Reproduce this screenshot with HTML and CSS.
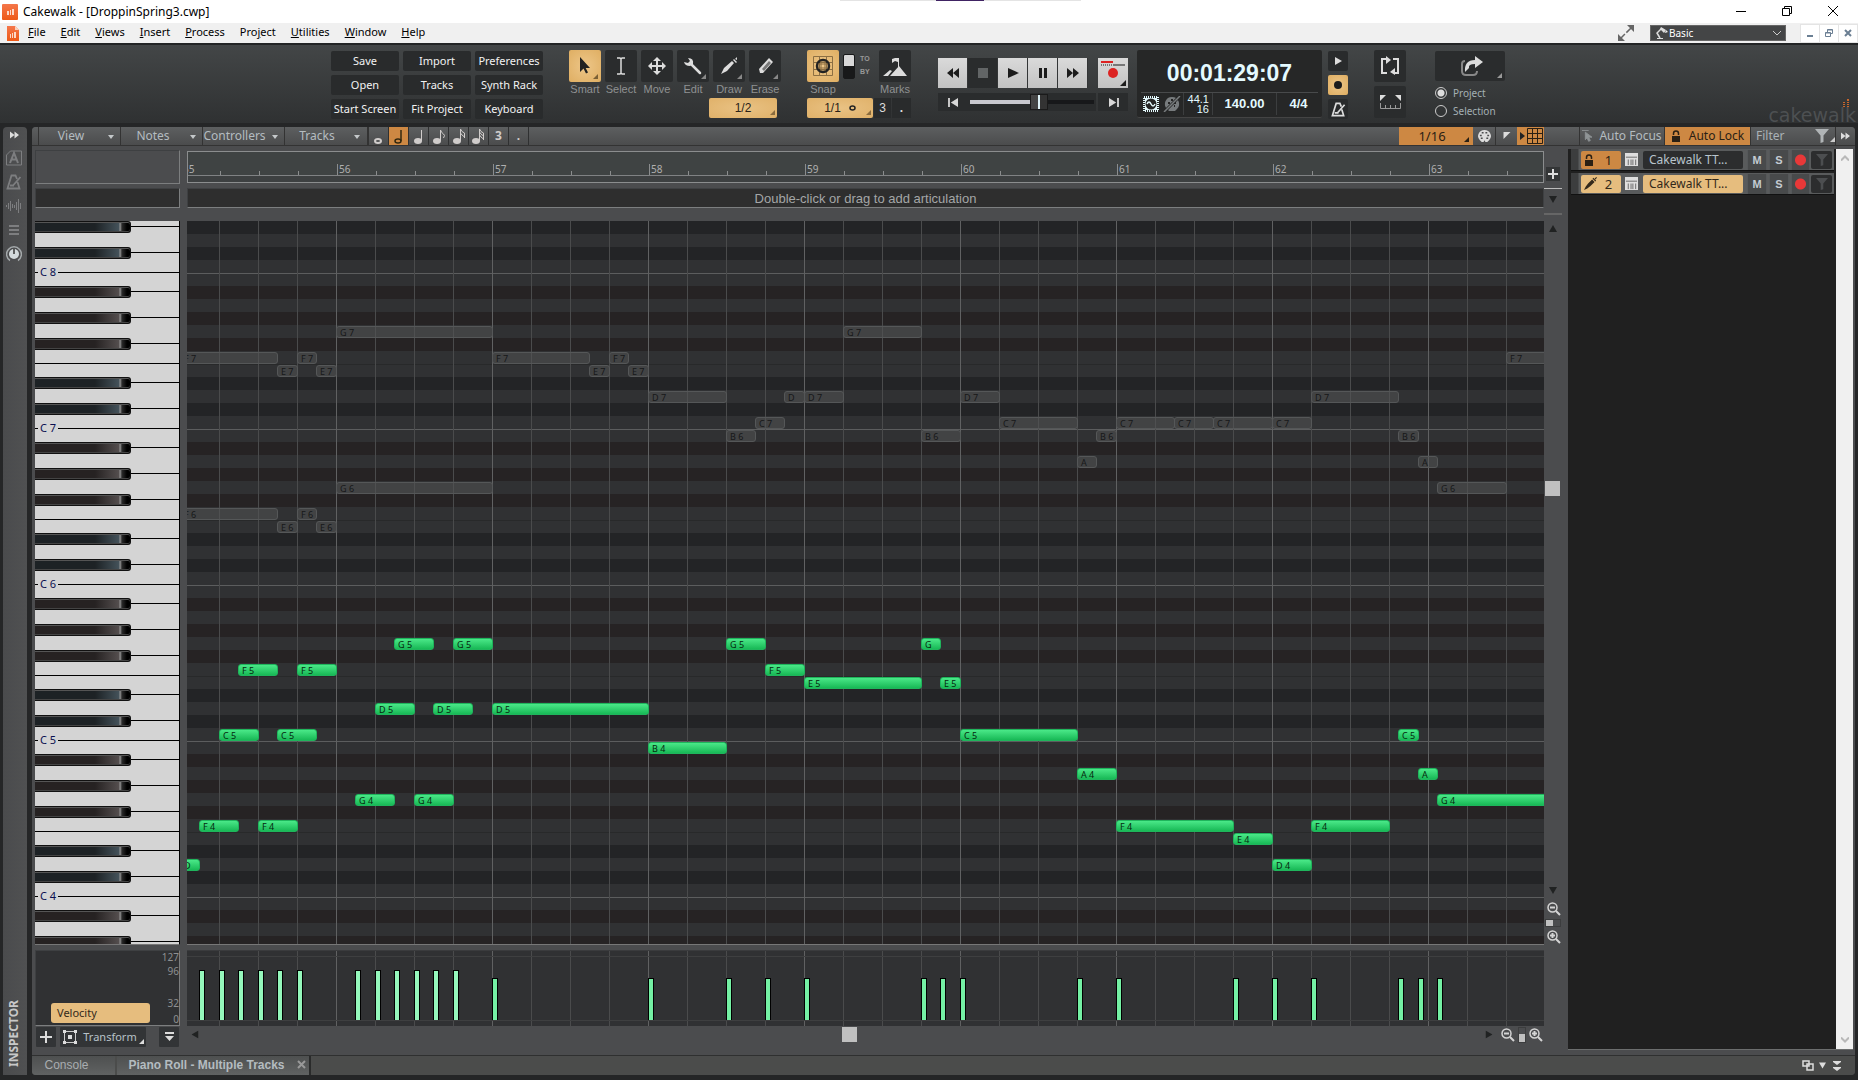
FILE: index.html
```html
<!DOCTYPE html>
<html lang="en">
<head>
<meta charset="utf-8">
<title>Cakewalk - [DroppinSpring3.cwp]</title>
<link rel="stylesheet" href="styles.css">
</head>
<body>
<svg class="defs" aria-hidden="true">
  <defs>
    <linearGradient id="flame" x1="0" y1="0" x2="0" y2="1"><stop offset="0" stop-color="#f4764a"/><stop offset="1" stop-color="#ee5a17"/></linearGradient>
    <symbol id="i-funnel" viewBox="0 0 14 14"><path d="M0 0h14L8.500 6.500V13L5.500 14V6.500z"/></symbol>
    <symbol id="i-ff" viewBox="0 0 10 8"><path d="M0 0l5 4-5 4zM5 0l5 4-5 4z"/></symbol>
    <symbol id="i-corner" viewBox="0 0 5 5"><path d="M5 0v5H0z"/></symbol>
    <symbol id="i-down" viewBox="0 0 8 7"><path d="M0 0h8L4 7z"/></symbol>
    <symbol id="i-metro" viewBox="0 0 16 16"><path d="M11 5L9.500 1.500h-4L1.500 14.500h12L11.500 8M4 11.500h4M14.500 3L7 11.500" fill="none" stroke="currentColor" stroke-width="1.800"/></symbol>
    <symbol id="i-rack" viewBox="0 0 14 14"><path d="M0 0h14v14H0z"/><path d="M1 4.500h12" stroke="#666"/><path d="M3.500 7v6M6.500 7v6M8.500 7v6M11.500 7v6" stroke="#666"/></symbol>
    <symbol id="i-zoomout" viewBox="0 0 14 14"><circle cx="5.500" cy="5.500" r="4.500" fill="none" stroke="currentColor" stroke-width="1.500"/><path d="M3 5.500h5M9 9l4 4" fill="none" stroke="currentColor" stroke-width="2"/></symbol>
    <symbol id="i-zoomin" viewBox="0 0 14 14"><circle cx="5.500" cy="5.500" r="4.500" fill="none" stroke="currentColor" stroke-width="1.500"/><path d="M3 5.500h5M5.500 3v5M9 9l4 4" fill="none" stroke="currentColor" stroke-width="2"/></symbol>
    <symbol id="i-lock" viewBox="0 0 10 12"><path d="M1 6h8v6H1z"/><path d="M2.500 5V3.500q0-2.500 2.500-2.500t2.500 2.500V5" fill="none" stroke="currentColor" stroke-width="1.500"/></symbol>
    <symbol id="i-pen" viewBox="0 0 16 16"><path d="M0 16l2-4 3-4 5-5 3 3-5 5-4 3zM10.500 2l1-1 3.500 3.500-1 1zM13 2l2-2 1 1-2 2z"/></symbol>
  </defs>
</svg>

<header class="titlebar">
  <svg class="app-icon" viewBox="0 0 16 16"><rect width="16" height="16" rx="1" fill="url(#flame)"/><path d="M5 7h2v4H5zM8 6h1v5H8zM10 5h2v6h-2z" fill="#fbd9c8"/></svg>
  <h1>Cakewalk - [DroppinSpring3.cwp]</h1>
  <div class="window-buttons">
    <button aria-label="Minimize"><svg viewBox="0 0 10 10"><path d="M0 5.500h10"/></svg></button>
    <button aria-label="Restore"><svg viewBox="0 0 10 10"><path d="M.5 2.500h7v7h-7zM2.500 2.500v-2h7v7h-2"/></svg></button>
    <button aria-label="Close"><svg viewBox="0 0 10 10"><path d="M0 0l10 10M10 0L0 10"/></svg></button>
  </div>
</header>

<nav class="menubar">
  <svg class="doc-icon" viewBox="0 0 12 15"><path d="M0 0h8l4 4v11H0z" fill="url(#flame)"/><path d="M8 0v4h4z" fill="#fbd0bb"/><path d="M3 8h1v4H3zM5 7h1v5H5zM7 6h2v6H7z" fill="#fbd9c8"/></svg>
  <a href="#"><u>F</u>ile</a><a href="#"><u>E</u>dit</a><a href="#"><u>V</u>iews</a><a href="#"><u>I</u>nsert</a><a href="#"><u>P</u>rocess</a><a href="#">Pro<u>j</u>ect</a><a href="#"><u>U</u>tilities</a><a href="#"><u>W</u>indow</a><a href="#"><u>H</u>elp</a>
  <div class="menu-right">
    <svg class="expand" viewBox="0 0 16 16"><path d="M9 0h7v7zM0 9v7h7z" fill="#666"/><path d="M2 14L14 2" stroke="#666" stroke-width="1.500" stroke-dasharray="7 2"/></svg>
    <div class="workspace-pick">
      <svg class="lamp" viewBox="0 0 12 12"><path d="M5 0l5 3-2 3-4-4zM1 11h6v1H1z" fill="#ddd"/><path d="M5 2L1 6l3 5" fill="none" stroke="#ddd" stroke-width="1.500"/><path d="M10 3l2 2-3 1z" fill="#eee"/></svg>
      <select aria-label="Workspace"><option>Basic</option></select>
      <svg class="caret" viewBox="0 0 8 5"><path d="M0 0l4 4 4-4" fill="none" stroke="#ccc"/></svg>
    </div>
    <div class="mdi-buttons">
      <button aria-label="Minimize document"><svg viewBox="0 0 8 8"><path d="M1 7h6" stroke="#6b7f93" stroke-width="2"/></svg></button>
      <button aria-label="Restore document"><svg viewBox="0 0 8 8"><path d="M.5 3.500h5v4h-5zM2.500 3V.500h5v4H6M.5 4h5M2.500 1h5" stroke="#6b7f93" fill="none"/></svg></button>
      <button aria-label="Close document"><svg viewBox="0 0 8 8"><path d="M1 1l6 6M7 1L1 7" stroke="#6b7f93" stroke-width="2"/></svg></button>
    </div>
  </div>
</nav>

<section class="control-bar">
  <div class="bar-start"></div>
  <div class="command-grid">
    <button>Save</button><button>Import</button><button>Preferences</button>
    <button>Open</button><button>Tracks</button><button>Synth Rack</button>
    <button>Start Screen</button><button>Fit Project</button><button>Keyboard</button>
  </div>
  <div class="tools">
    <div class="tool-row">
      <label class="tool"><button class="tile on"><svg viewBox="0 0 32 32"><path d="M11 7v15l3.500-3.500 2.500 5 2-1-2.300-4.500H21z" fill="#222"/><path d="M29 24v5h-5z" fill="#7a5f35"/></svg></button>Smart</label>
      <label class="tool"><button class="tile"><svg viewBox="0 0 32 32"><path d="M12 8h3l1 1 1-1h3M16 9v14M12 24h3l1-1 1 1h3" fill="none" stroke="#ddd" stroke-width="1.500"/></svg></button>Select</label>
      <label class="tool"><button class="tile"><svg viewBox="0 0 32 32"><path d="M16 9v14M9 16h14" stroke="#ddd" stroke-width="2"/><path d="M16 7l4 4h-8zM16 25l4-4h-8zM7 16l4-4v8zM25 16l-4-4v8z" fill="#ddd"/></svg></button>Move</label>
      <label class="tool"><button class="tile"><svg viewBox="0 0 32 32"><path d="M14 14l9 9" stroke="#ddd" stroke-width="2.500" stroke-linecap="round"/><path d="M7 12q1 4 6 4l3-2q1-6-5-6l2 3-2 2z" fill="#ddd"/><path d="M29 24v5h-5z" fill="#888"/></svg></button>Edit</label>
      <label class="tool"><button class="tile"><svg viewBox="0 0 32 32"><path d="M8 24l3-6 8-7 2 2-7 8zM20 10l1-1 3 3-1 1zM22 9l2-2v3z" fill="#ddd"/><path d="M29 24v5h-5z" fill="#888"/></svg></button>Draw</label>
      <label class="tool"><button class="tile"><svg viewBox="0 0 32 32"><path d="M10 19L20 8l4 4-10 11h-3z" fill="#ddd"/><path d="M13 19l7-8 2 2-7 8z" fill="#777"/><path d="M29 24v5h-5z" fill="#888"/></svg></button>Erase</label>
    </div>
    <button class="value draw-res">1/2<svg class="corner"><use href="#i-corner"/></svg></button>
  </div>
  <div class="snap">
    <div class="snap-row">
      <label class="tool"><button class="tile on"><svg viewBox="0 0 32 32"><path d="M6.500 6.500h19v19h-19zM12.500 6v20M19.500 6v20M6 12.500h20M6 19.500h20" fill="none" stroke="#8c6f43"/><circle cx="16" cy="16" r="6" fill="none" stroke="#222" stroke-width="2.500"/><path d="M14 11v10M18 11v10M11 14h10M11 18h10" stroke="#8c6f43"/></svg></button>Snap</label>
      <div class="toby"><button class="switch" aria-label="Snap to or by"></button><div class="toby-text"><span>TO</span><span>BY</span></div></div>
      <label class="tool"><button class="tile"><svg viewBox="0 0 32 32"><path d="M11 26l9-10 8 10zM4 26l7-6 2 1-4 5z" fill="#ddd"/><path d="M19.500 8v10" stroke="#ddd"/><path d="M13 9l3-1h3v4l-3-1-3 2z" fill="#ddd"/></svg></button>Marks</label>
    </div>
    <div class="snap-values">
      <button class="value snap-res">1/1 <svg class="whole" viewBox="0 0 7 6"><ellipse cx="3.500" cy="3" rx="2.500" ry="2" fill="none" stroke="#222" stroke-width="1.500"/></svg><svg class="corner"><use href="#i-corner"/></svg></button><button class="mini">3</button><button class="mini dot">.</button>
    </div>
  </div>
  <div class="transport">
    <div class="transport-row">
      <button class="tp" aria-label="Rewind"><svg viewBox="0 0 30 30"><path d="M15 10v10l-6-5zM21 10v10l-6-5z"/></svg></button>
      <button class="tp stop" aria-label="Stop"><svg viewBox="0 0 30 30"><path d="M10 10h10v10H10z"/></svg></button>
      <button class="tp" aria-label="Play"><svg viewBox="0 0 30 30"><path d="M10 10l11 5-11 5z"/></svg></button>
      <button class="tp" aria-label="Pause"><svg viewBox="0 0 30 30"><path d="M11 10h3v10h-3zM16 10h3v10h-3z"/></svg></button>
      <button class="tp" aria-label="Fast forward"><svg viewBox="0 0 30 30"><path d="M9 10l6 5-6 5zM15 10l6 5-6 5z"/></svg></button>
      <button class="tp rec" aria-label="Record"><svg viewBox="0 0 30 30"><path d="M3 3h12v2H3z" fill="#d22"/><path d="M15 6h12v2H15z" fill="#777"/><path d="M3 7h12" stroke="#777" stroke-width="2" stroke-dasharray="1 1"/><circle cx="15" cy="15" r="5" fill="#dc2322"/><path d="M28 22v6h-6z"/></svg></button>
    </div>
    <div class="transport-row seek">
      <div class="seek-box"><button class="seek-btn" aria-label="Go to start"><svg viewBox="0 0 12 10"><path d="M0 0h2v10H0zM11 0v10L3 5z"/></svg></button><input type="range" min="0" max="100" value="57" aria-label="Position"></div>
      <button class="seek-end" aria-label="Go to end"><svg viewBox="0 0 12 10"><path d="M10 0h2v10h-2zM1 0v10l8-5z"/></svg></button>
    </div>
  </div>
  <div class="display">
    <div class="clock">00:01:29:07</div>
    <div class="readouts">
      <svg class="chip" viewBox="0 0 16 16"><path d="M1 1h14v14H1z" fill="none" stroke="#e6fbff" stroke-width="2" stroke-dasharray="1 1"/><path d="M2 2h12v12H2z" fill="#e6fbff"/><circle cx="8" cy="8" r="5.500" fill="#252525"/><path d="M4 8q2-4 4 0t4 0" fill="none" stroke="#e6fbff" stroke-width="1.500"/></svg>
      <svg class="midi" viewBox="0 0 18 16"><path d="M9 1a7 7 0 0 1 5 12l-2 2H6l-2-2A7 7 0 0 1 9 1z" fill="#777b7d"/><path d="M5 7h2M8 4h2M11 7h2M6 10h1M11 10h1" stroke="#252525" stroke-width="2"/><path d="M1 16L17 0" stroke="#252525" stroke-width="3"/><path d="M1 16L17 0" stroke="#777b7d" stroke-width="1.500"/></svg>
      <div class="rate"><span>44.1</span><span>16</span></div>
      <div class="tempo">140.00</div>
      <div class="meter">4/4</div>
    </div>
  </div>
  <div class="mode">
    <button aria-label="Play mode"><svg viewBox="0 0 20 20"><path d="M7 6l7 4-7 4z"/></svg></button>
    <button class="on" aria-label="Record mode"><svg viewBox="0 0 20 20"><circle cx="10" cy="10" r="4"/></svg></button>
    <button class="metro" aria-label="Metronome"><svg><use href="#i-metro"/></svg></button>
  </div>
  <div class="loop">
    <button class="tile" aria-label="Loop"><svg viewBox="0 0 32 32"><path d="M12 9H8v14h5M19 9h5v14h-4" fill="none" stroke="#ddd" stroke-width="2"/><path d="M12 6l5 4-5 4zM21 18v7l-5-3z" fill="#ddd"/></svg></button>
    <button class="tile" aria-label="Punch"><svg viewBox="0 0 32 32"><path d="M6 9h6l-6 6zM27 9h-6l6 6z" fill="#ddd"/><path d="M6.500 17v5.500h20V17M11.500 19v3M16.500 19v3M21.500 19v3" fill="none" stroke="#999"/></svg></button>
  </div>
  <div class="export">
    <button aria-label="Export"><svg viewBox="0 0 70 30"><path d="M30 10q-3 0-3 3v7q0 4 4 4h7q4 0 4-4" fill="none" stroke="#888" stroke-width="2"/><path d="M30 21q-1-12 10-12V5l8 6-8 6v-4q-7 0-6 4z" fill="#ddd"/><path d="M67 22v5h-5z" fill="#999"/></svg></button>
    <label><input type="radio" name="range" checked>Project</label>
    <label><input type="radio" name="range">Selection</label>
  </div>
  <div class="bar-end">
    <div class="brand"><svg viewBox="0 0 6 8"><path d="M0 3h2v1H0zM0 5h2v1H0zM0 7h2v1H0zM4 0h2v2H4zM4 3h2v1H4zM4 5h2v1H4zM4 7h2v1H4z" fill="#c8662c"/></svg><span>cakewalk</span></div>
  </div>
</section>

<main class="workspace">
  <aside class="inspector">
    <button aria-label="Expand inspector"><svg class="ff"><use href="#i-ff"/></svg></button>
    <svg viewBox="0 0 16 16"><path d="M4.500 1h11v14H.5V5z" fill="none" stroke="#7d7e80"/><path d="M4 13L8 3l4 10M5.500 9.500h5" fill="none" stroke="#7d7e80" stroke-width="2"/></svg>
    <svg class="dim"><use href="#i-metro"/></svg>
    <svg viewBox="0 0 16 16"><path d="M.5 7v2M2.500 5v6M4.500 3v10M6.500 6v4M8.500 7v3M10.500 4v8M12.500 1v14M14.500 5v6" stroke="#7d7e80"/></svg>
    <svg viewBox="0 0 16 16"><path d="M3 4h10M3 8h10M3 12h10" stroke="#7d7e80" stroke-width="2"/></svg>
    <svg viewBox="0 0 16 16"><path d="M4 14.500a7.400 7.400 0 1 1 8 0" fill="none" stroke="#a4a9ab" stroke-width="1.500"/><circle cx="8" cy="8" r="5" fill="#d3dadc"/><path d="M8 3v5" stroke="#333" stroke-width="1.500"/></svg>
    <span class="inspector-name">INSPECTOR</span>
  </aside>

  <div class="editor">
    <div class="toolbar">
      <div class="menus">
        <button>View<i></i></button><button>Notes<i></i></button><button>Controllers<i></i></button><button>Tracks<i></i></button>
      </div>
      <div class="durations">
        <button aria-label="Whole"><svg viewBox="0 0 19 18"><ellipse cx="9" cy="14" rx="3" ry="2" fill="none" stroke="#d0cccb" stroke-width="2"/></svg></button>
        <button class="on" aria-label="Half"><svg viewBox="0 0 19 18"><ellipse cx="9" cy="14" rx="3" ry="2" fill="none" stroke="#33280f" stroke-width="1.500"/><path d="M12 14V3" stroke="#33280f" stroke-width="1.500"/></svg></button>
        <button aria-label="Quarter"><svg viewBox="0 0 19 18"><ellipse cx="9" cy="14" rx="4" ry="3" fill="#d0cccb"/><path d="M12.500 14V3" stroke="#d0cccb"/></svg></button>
        <button aria-label="Eighth"><svg viewBox="0 0 19 18"><ellipse cx="8" cy="14" rx="4" ry="3" fill="#d0cccb"/><path d="M11.500 14V3q1 3 3 4t0 4" fill="none" stroke="#d0cccb"/></svg></button>
        <button aria-label="Sixteenth"><svg viewBox="0 0 19 18"><ellipse cx="8" cy="14" rx="4" ry="3" fill="#d0cccb"/><path d="M11.500 14V2q1 3 4 4v5M11.500 6q1 2 4 4" fill="none" stroke="#d0cccb"/></svg></button>
        <button aria-label="Thirty-second"><svg viewBox="0 0 19 18"><ellipse cx="7" cy="14" rx="4" ry="3" fill="#d0cccb"/><path d="M10.500 14V2q1 3 4 4v7M10.500 5q1 2 4 4M10.500 8q1 2 4 4" fill="none" stroke="#d0cccb"/></svg></button>
        <button class="digit">3</button>
        <button class="digit">.</button>
      </div>
      <div class="grid-tools">
        <button class="res">1/16<svg class="corner"><use href="#i-corner"/></svg></button>
        <button class="palette" aria-label="Note colours"><svg viewBox="0 0 14 13"><path d="M7 0a7 6.500 0 0 1 5 11l-2 2H8l-1-2-1 2H4l-2-2A7 6.500 0 0 1 7 0z" fill="#dcdcdc"/><path d="M2 6h2M4 3h2M8 3h2M10 6h2M3 9h2M9 9h2" stroke="#4b4c4e" stroke-width="1.500"/></svg></button>
        <button class="flag" aria-label="Now time"><svg viewBox="0 0 8 8"><path d="M0 0h8L0 8z" fill="#dcdcdc"/></svg></button>
        <button class="gridbtn" aria-label="Show grid"><svg viewBox="0 0 24 16"><path d="M1 4l5 4-5 4z" fill="#222"/><path d="M8.500.5h15v15h-15zM13.500 0v16M18.500 0v16M8 5.500h16M8 10.500h16" fill="none" stroke="#2a2014"/></svg></button>
      </div>
      <div class="track-tools">
        <button class="focus"><svg class="arrow" viewBox="0 0 12 14"><path d="M0 1h8M4 3v9l2-2 2 4 2-1-2-4h4z" fill="#8f9496" stroke="#8f9496"/></svg>Auto Focus</button>
        <button class="lock"><svg class="padlock"><use href="#i-lock"/></svg>Auto Lock</button>
        <div class="filter"><input type="text" placeholder="Filter" aria-label="Filter"><svg class="funnel"><use href="#i-funnel"/></svg><svg class="corner"><use href="#i-corner"/></svg></div>
        <button class="more" aria-label="Collapse tracks"><svg class="ff"><use href="#i-ff"/></svg></button>
      </div>
    </div>

    <div class="roll">
      <div class="ruler-head"></div>
      <div class="ruler" id="ruler"></div>
      <div class="ruler-side"><button aria-label="Add"><svg viewBox="0 0 10 10"><path d="M4 0h2v10H4zM0 4h10v2H0z"/></svg></button></div>

      <div class="art-head"></div>
      <div class="articulation">Double-click or drag to add articulation</div>
      <div class="art-side"><svg class="tri"><use href="#i-down"/></svg></div>

      <div class="keys" id="keys"></div>
      <div class="lane" id="lane"></div>
      <div class="vscroll">
        <svg class="tri up"><use href="#i-down"/></svg>
        <span class="track-v"><i class="thumb"></i></span>
        <svg class="tri"><use href="#i-down"/></svg>
        <svg class="zoom"><use href="#i-zoomout"/></svg>
        <span class="zoom-v"><i></i></span>
        <svg class="zoom"><use href="#i-zoomin"/></svg>
      </div>

      <div class="vel-head">
        <div class="scale"><span>127</span><span>96</span><span>32</span><span>0</span></div>
        <button class="velocity">Velocity</button>
      </div>
      <div class="velocities" id="velocities"></div>
      <div class="vel-side"></div>

      <div class="ctl-head">
        <button class="add" aria-label="Add controller"><svg viewBox="0 0 12 12"><path d="M5 0h2v12H5zM0 5h12v2H0z"/></svg></button>
        <button class="transform"><svg viewBox="0 0 14 14"><path d="M1.500 1.500h11v11h-11z" fill="none" stroke="#ccc"/><path d="M0 0h3v3H0zM11 0h3v3h-3zM0 11h3v3H0zM11 11h3v3h-3zM5 5h4v4H5z"/></svg>Transform<svg class="corner"><use href="#i-corner"/></svg></button>
        <button class="add" aria-label="Controller menu"><svg viewBox="0 0 12 12"><path d="M2 1h9v2H2zM2 5h9l-4.500 5z"/></svg></button>
      </div>
      <div class="hscroll">
        <svg class="tri left"><use href="#i-down"/></svg>
        <span class="track-h"><i class="thumb"></i></span>
        <svg class="tri right"><use href="#i-down"/></svg>
        <svg class="zoom"><use href="#i-zoomout"/></svg>
        <span class="zoom-h"><i></i></span>
        <svg class="zoom"><use href="#i-zoomin"/></svg>
      </div>
    </div>

    <div class="track-pane">
      <div class="track-list">
        <div class="track">
          <button class="num locked"><svg class="padlock"><use href="#i-lock"/></svg>1</button>
          <svg class="rack"><use href="#i-rack"/></svg>
          <span class="name">Cakewalk TT...</span>
          <button class="ms">M</button><button class="ms">S</button><button class="arm" aria-label="Arm"></button>
          <button class="tf" aria-label="Track filter"><svg><use href="#i-funnel"/></svg></button>
        </div>
        <div class="track active">
          <button class="num"><svg class="pen"><use href="#i-pen"/></svg>2</button>
          <svg class="rack"><use href="#i-rack"/></svg>
          <span class="name">Cakewalk TT...</span>
          <button class="ms">M</button><button class="ms">S</button><button class="arm" aria-label="Arm"></button>
          <button class="tf" aria-label="Track filter"><svg><use href="#i-funnel"/></svg></button>
        </div>
      </div>
      <div class="pane-scroll">
        <svg viewBox="0 0 8 5"><path d="M0 5l4-4 4 4" /></svg>
        <svg viewBox="0 0 8 5"><path d="M0 0l4 4 4-4" /></svg>
      </div>
    </div>

    <footer class="tabs">
      <button class="tab">Console</button>
      <button class="tab current">Piano Roll - Multiple Tracks<svg viewBox="0 0 9 9"><path d="M1 1l7 7M8 1L1 8" stroke="#999" stroke-width="2"/></svg></button>
      <div class="tab-tools">
        <svg class="dock" viewBox="0 0 12 11"><path d="M1 1h6v5H1zM5 4h6v6H5z" fill="#4b4c4b" stroke="#ddd" stroke-width="1.500"/></svg>
        <svg class="tri"><use href="#i-down"/></svg>
        <svg class="double" viewBox="0 0 8 10"><path d="M0 0h8v1L4 4 0 1zM0 6h8v1L4 10 0 7z" fill="#ddd"/></svg>
      </div>
    </footer>
  </div>
</main>
<script src="roll.js"></script>
</body>
</html>
```
FILE: roll.js
```js
// Horizontal scale: one bar is 156px, a sixteenth 9.75px; bar 55 starts 7px left of the view.
const SIXTEENTH = 9.75;
const ORIGIN = -7;
const ROW = 13;
const TOP_PITCH = 99; // D#8, with C4 = 48
const STEPS = { C: 0, D: 2, E: 4, F: 5, G: 7, A: 9, B: 11 };

const xOf = t => Math.floor(t * SIXTEENTH) + ORIGIN;
const rowOf = pitch => (TOP_PITCH - pitch) * ROW;
const pitchOf = name => STEPS[name[0]] + 12 * Number(name[1]);

// [note, start, length] in sixteenths from bar 55
const active = [
  ['D4', 0, 2], ['F4', 2, 4], ['C5', 4, 4], ['F5', 6, 4], ['F4', 8, 4], ['C5', 10, 4], ['F5', 12, 4],
  ['G4', 18, 4], ['D5', 20, 4], ['G5', 22, 4], ['G4', 24, 4], ['D5', 26, 4], ['G5', 28, 4],
  ['D5', 32, 16], ['B4', 48, 8], ['G5', 56, 4], ['F5', 60, 4], ['E5', 64, 12], ['G5', 76, 2],
  ['E5', 78, 2], ['C5', 80, 12], ['A4', 92, 4], ['F4', 96, 12], ['E4', 108, 4], ['D4', 112, 4],
  ['F4', 116, 8], ['C5', 125, 2], ['A4', 127, 2], ['G4', 129, 16]
];
const locked = [
  ['F7', 0, 10], ['E7', 10, 2], ['F7', 12, 2], ['E7', 14, 2], ['G7', 16, 16], ['F7', 32, 10],
  ['E7', 42, 2], ['F7', 44, 2], ['E7', 46, 2], ['D7', 48, 8], ['B6', 56, 3], ['C7', 59, 3],
  ['D7', 62, 2], ['D7', 64, 4], ['G7', 68, 8], ['B6', 76, 4], ['D7', 80, 4], ['C7', 84, 8],
  ['A6', 92, 2], ['B6', 94, 2], ['C7', 96, 6], ['C7', 102, 4], ['C7', 106, 6], ['C7', 112, 4],
  ['D7', 116, 9], ['B6', 125, 2], ['A6', 127, 2], ['G6', 129, 7], ['F7', 136, 16],
  ['F6', 0, 10], ['E6', 10, 2], ['F6', 12, 2], ['E6', 14, 2], ['G6', 16, 16]
];

function add(parent, className, style, text) {
  const el = document.createElement('span');
  el.className = className;
  Object.assign(el.style, style);
  if (text) el.textContent = text;
  parent.append(el);
  return el;
}

const lane = document.getElementById('lane');
function drawNotes(notes, className) {
  for (const [name, start, length] of notes) {
    const x = xOf(start);
    const short = length <= 2 && 'DGA'.includes(name[0]);
    add(lane, className, {
      left: x + 'px',
      top: rowOf(pitchOf(name)) + 1 + 'px',
      width: xOf(start + length) - x + 1 + 'px'
    }, short ? name[0] : name[0] + ' ' + name[1]);
  }
}
drawNotes(locked, 'note locked');
drawNotes(active, 'note');

const velocities = document.getElementById('velocities');
for (const [, start] of active.slice(1)) {
  add(velocities, start < 30 ? 'vel strong' : 'vel', { left: xOf(start) + 'px' });
}

const ruler = document.getElementById('ruler');
for (let beat = 0; beat < 36; beat++) {
  const left = xOf(beat * 4) + 'px';
  if (beat % 4) add(ruler, 'beat', { left });
  else add(ruler, 'bar', { left }, String(55 + beat / 4));
}

const keys = document.getElementById('keys');
for (let pitch = TOP_PITCH; pitch > 43; pitch--) {
  const step = pitch % 12;
  const top = rowOf(pitch);
  if ([1, 3].includes(step)) add(keys, 'black cool', { top: top + 'px' });
  else if ([6, 8, 10].includes(step)) add(keys, 'black', { top: top + 'px' });
  else if (step === 5) add(keys, 'edge', { top: top + 12 + 'px' });
  else if (step === 0) {
    add(keys, 'edge', { top: top + 12 + 'px' });
    add(keys, 'octave', { top: top + 4 + 'px' }, 'C ' + pitch / 12);
  }
}
```
FILE: styles.css
```css
* { box-sizing: border-box; }
body {
  margin: 0;
  height: 100vh;
  display: flex;
  flex-direction: column;
  background: #252627;
  color: #c4c6c8;
  font: 12px/16px "Noto Sans", "Open Sans", sans-serif;
  overflow: hidden;
}
button, input, select { font: inherit; color: inherit; border: 0; padding: 0; margin: 0; background: none; border-radius: 0; }
button { display: flex; align-items: center; justify-content: center; flex: none; }
svg { display: block; fill: currentColor; flex: none; }
.defs { position: absolute; width: 0; height: 0; }
.corner { position: absolute; right: 2px; bottom: 3px; width: 5px; height: 5px; color: #8a6c3f; }

/* Title and menu */
.titlebar {
  flex: none; height: 23px; color: #000; display: flex; align-items: center; padding-left: 2px;
  background:
    linear-gradient(#402363, #402363) 936px 0 / 48px 1px no-repeat,
    linear-gradient(#e4e4e4, #e4e4e4) 840px 0 / 241px 1px no-repeat,
    #fff;
}
.titlebar h1 { font-size: 12px; font-weight: 400; margin: 0 0 0 5px; }
.app-icon { width: 16px; height: 16px; }
.window-buttons { margin: 0 2px 2px auto; display: flex; }
.window-buttons button { width: 46px; height: 20px; }
.window-buttons svg { width: 10px; height: 10px; fill: none; stroke: #000; }
.menubar { flex: none; height: 20px; background: #f0f0f0; color: #000; display: flex; align-items: center; gap: 15px; padding-left: 7px; }
.menubar a { color: #000; text-decoration: none; font-size: 11px; line-height: 16px; padding-bottom: 2px; }
.menubar a:first-of-type { margin-left: -6px; }
.doc-icon { width: 12px; height: 15px; }
.menu-right { margin-left: auto; display: flex; align-items: center; }
.expand { width: 16px; height: 16px; margin-right: 16px; }
.workspace-pick { display: flex; align-items: center; width: 136px; height: 16px; margin-right: 14px; padding: 0 4px 0 5px; background: #444546; border: 1px solid #666; color: #fff; }
.workspace-pick select { flex: 1; appearance: none; outline: 0; font-size: 10px; padding-left: 1px; }
.lamp { width: 12px; height: 12px; }
.caret { width: 8px; height: 5px; }
.mdi-buttons { display: flex; gap: 1px; background: #e4e4e4; padding: 1px; }
.mdi-buttons button { width: 18px; height: 17px; background: #fff; }
.mdi-buttons svg { width: 8px; height: 8px; }

/* Control bar */
.control-bar {
  flex: none; height: 84px; padding-top: 5px;
  border-top: 2px solid #232526; border-bottom: 4px solid #252627;
  background: linear-gradient(#434647, #2f3132);
  display: flex; align-items: flex-start;
}
.bar-start { flex: 1 1 331px; }
.bar-end { flex: 1 1 353px; align-self: stretch; display: flex; justify-content: flex-end; align-items: flex-end; padding: 0 2px 0 0; }
.command-grid { display: grid; grid-template-columns: repeat(3, 68px); gap: 4px; margin-top: 1px; }
.command-grid button { height: 20px; background: #292b2c; border-radius: 2px; color: #f2f2f2; font-size: 11px; white-space: nowrap; }
.tools { margin-left: 26px; display: grid; gap: 2px; }
.tool-row, .snap-row { display: flex; gap: 4px; }
.tool { width: 32px; display: flex; flex-direction: column; align-items: center; font: 11px/14px "Liberation Sans", sans-serif; color: #8f9192; }
.tile { width: 32px; height: 32px; background: #2a2c2d; border-radius: 2px; }
.tile svg { width: 32px; height: 32px; }
.tile.on, .mode .on { background: radial-gradient(#edc688, #dfae62); }
.value { position: relative; height: 20px; background: radial-gradient(#e9c284, #e0b169); color: #2a2218; border-radius: 2px; font: 12px/16px "Liberation Sans", sans-serif; gap: 8px; }
.whole { width: 7px; height: 6px; }
.draw-res { width: 68px; margin-left: 140px; }
.snap { margin-left: 26px; display: grid; gap: 2px; }
.snap-row .tool:last-child { margin-left: auto; }
.toby { display: flex; gap: 5px; padding-top: 4px; }
.switch { width: 12px; height: 25px; border: 1px solid #18191a; background: linear-gradient(#d8d8d8 0 11px, #18191a 11px); border-radius: 2px; }
.toby-text { display: grid; align-content: start; gap: 3px; font: bold 7px/10px "Liberation Sans", sans-serif; color: #999; }
.snap-values { display: flex; width: 104px; gap: 1px; }
.snap-res { width: 66px; }
.mini { width: 17px; background: #292b2c; color: #ddd; font: 12px/16px "Liberation Sans", sans-serif; }
.mini.dot { flex: 1; font-weight: 700; }
.transport { margin: 8px 0 0 27px; display: grid; grid-template-columns: 100%; gap: 5px; width: 190px; }
.transport-row { display: flex; }
.tp { width: 30px; height: 30px; background: linear-gradient(#dadada, #c2c2c2); color: #1c1c1c; border-right: 1px solid #333536; }
.tp svg { width: 30px; height: 30px; }
.tp.stop { background: #2a2c2d; color: #626566; }
.tp.rec { margin-left: auto; border-right: 0; }
.seek-box { flex: 1; min-width: 0; height: 18px; display: flex; align-items: center; background: #2a2c2d; padding: 0 2px 0 10px; gap: 11px; margin-right: 2px; }
.seek-btn svg, .seek-end svg { width: 11px; height: 9px; color: #d8d8d8; }
.seek-end { width: 30px; height: 18px; background: #2a2c2d; }
.seek input { flex: 1; min-width: 0; width: 0; height: 18px; appearance: none; background: linear-gradient(90deg, #c9c9cf 0 57%, #17181a 57%) center/100% 4px no-repeat; }
.seek input::-webkit-slider-thumb { appearance: none; width: 18px; height: 16px; border: 1px solid #1a1a1a; background: linear-gradient(90deg, #444 7px, #dff3f8 7px 9px, #333 9px); }
.display { margin-left: 9px; width: 185px; height: 68px; background: #262727; border-bottom: 1px solid #444; padding: 6px 4px 0; color: #e4faff; font-family: "Liberation Sans", sans-serif; border-radius: 2px; }
.clock { height: 37px; font-size: 23px; line-height: 34px; font-weight: 700; text-align: center; border-bottom: 1px solid #484a4b; }
.readouts { display: flex; align-items: center; height: 22px; }
.chip { width: 16px; height: 16px; margin-left: 2px; }
.midi { width: 18px; height: 16px; margin: 0 2px 0 4px; }
.rate { display: grid; align-content: center; text-align: right; font-size: 11px; line-height: 10px; width: 30px; height: 22px; padding-right: 3px; border: solid #3c3e3f; border-width: 0 1px; }
.tempo { flex: 1; text-align: center; font-size: 13px; font-weight: 700; }
.meter { width: 42px; padding-left: 2px; text-align: center; font-size: 13px; font-weight: 700; line-height: 22px; border-left: 1px solid #3c3e3f; }
.mode { margin: 1px 0 0 6px; display: grid; gap: 4px; }
.mode button { width: 20px; height: 20px; background: #292b2c; border-radius: 2px; color: #ddd; }
.mode svg { width: 20px; height: 20px; }
.mode .on { color: #1c1c1c; }
.mode .metro svg { width: 15px; height: 15px; }
.loop { margin-left: 26px; display: grid; gap: 4px; }
.export { margin: 1px 0 0 29px; width: 70px; display: grid; color: #a4b0b4; }
.export button { width: 70px; height: 30px; background: #2a2c2d; border-radius: 2px; margin-bottom: 3px; }
.export button svg { width: 70px; height: 30px; }
.export label { display: flex; align-items: center; gap: 6px; height: 18px; font-size: 10px; white-space: nowrap; }
.export input { appearance: none; width: 12px; height: 12px; border: 1px solid #ccc; border-radius: 50%; flex: none; }
.export input:checked { background: radial-gradient(#ddd 0 3px, transparent 4px); }
.brand { display: grid; justify-items: end; color: #4d5052; font: 19px/16px "DejaVu Sans", sans-serif; }
.brand svg { width: 6px; height: 8px; margin: 0 7px 0 0; }

/* Workspace */
.workspace { flex: 1; min-height: 0; display: grid; grid-template-columns: 24px minmax(0, 1fr); gap: 5px; padding: 0 3px 5px; }
.inspector { background: linear-gradient(90deg, #4a4b4d, #505152); border-radius: 4px 4px 0 0; display: flex; flex-direction: column; align-items: center; gap: 8px; padding-right: 2px; color: #ddd; }
.inspector button { width: 24px; height: 15px; }
.inspector svg { width: 16px; height: 16px; }
.inspector svg.dim { color: #7d7e80; }
svg.ff { width: 9px; height: 8px; }
.inspector button svg { width: 9px; height: 8px; }
.inspector-name { margin: auto 0 8px; writing-mode: vertical-rl; transform: rotate(180deg); font-size: 12px; line-height: 16px; font-weight: 700; color: #c8c8c8; }
.editor {
  min-width: 0; display: grid;
  grid-template: 19px minmax(0, 1fr) 20px / minmax(0, 1fr) 287px;
  background: #4b4c4e; border-radius: 4px; overflow: hidden;
}
.toolbar { grid-column: 1 / 3; display: flex; background: linear-gradient(#5d5f60, #4b4c4d); border-bottom: 1px solid #333; color: #b4bcc0; }
.toolbar button { line-height: 16px; padding-bottom: 1px; }
.menus { display: flex; padding-left: 6px; }
.menus button { position: relative; width: 82px; padding-right: 17px; border-left: 1px solid #333; }
.menus button:nth-child(3) { padding-right: 18px; }
.menus i { position: absolute; right: 6px; top: 8px; border: solid transparent; border-width: 4px 3px 0; border-top-color: #c4c8ca; }
.durations { display: flex; border-left: 2px solid #333; margin-left: 1px; }
.durations button { width: 20px; border-right: 1px solid #2f3031; padding: 0; }
.durations svg { width: 19px; height: 18px; }
.durations .on, .lock, .res, .gridbtn { background: #cd8843; color: #2a2014; }
.digit { font: bold 12px/16px "Noto Sans", sans-serif; color: #d0cccb; }
.grid-tools { display: flex; margin-left: auto; }
.grid-tools .res { position: relative; width: 74px; padding-right: 8px; font-size: 13px; }
.res .corner { color: #2a2014; right: 4px; }
.palette { width: 23px; border-right: 1px solid #333; }
.palette svg { width: 13px; height: 12px; }
.flag { width: 21px; }
.flag svg { width: 8px; height: 7px; }
.gridbtn { width: 27px; }
.gridbtn svg { width: 24px; height: 16px; }
.track-tools { display: flex; margin-left: 35px; width: 276px; }
.track-tools > * { border-left: 1px solid #333; }
.focus { width: 85px; gap: 7px; white-space: nowrap; }
.arrow { width: 10px; height: 13px; }
.lock { width: 86px; gap: 8px; white-space: nowrap; }
.padlock { width: 10px; height: 12px; }
.filter { position: relative; width: 85px; display: flex; align-items: center; padding: 0 5px; }
.filter input { width: 59px; height: 16px; }
.filter input::placeholder { color: #aab2b6; opacity: 1; }
.funnel { width: 14px; height: 14px; color: #b0b4b6; }
.filter .corner { color: #ccc; right: 0; }
.track-tools .more { flex: 1; color: #ddd; }

/* Piano roll */
.roll {
  display: grid; min-height: 0; padding: 4px 0 5px 3px;
  grid-template: 33px 20px minmax(0, 1fr) 81px 24px / 152px minmax(0, 1fr) 24px;
  background: #4b4c4e;
}
.ruler-head, .art-head, .vel-head, .keys, .ctl-head { width: 145px; }
.ruler-head, .art-head, .vel-head { border: 1px solid #3e4042; border-right-color: #7c7e7f; border-bottom-color: #7c7e7f; }
.ruler { position: relative; overflow: hidden; margin-top: 1px; height: 32px; border: 1px solid #8b8d8e; background: linear-gradient(#3f4343 0 23px, #808284 23px 24px, #3d4041 24px); font: 10px/10px "Noto Sans", sans-serif; color: #b0b0b0; }
.bar, .beat { position: absolute; top: 12px; height: 11px; border-left: 1px solid #8b8d8e; padding-left: 1px; }
.beat { top: 19px; height: 4px; }
.ruler-side { display: flex; align-items: flex-end; padding: 0 0 2px 2px; }
.ruler-side button { width: 14px; height: 14px; background: #343637; color: #ddd; }
.ruler-side svg { width: 10px; height: 10px; }
.ruler-head { height: 34px; }
.art-head, .articulation { margin-top: 5px; height: 20px; background: #2e2e2e; }
.articulation { border: 1px solid #3e4042; border-bottom-color: #7c7e7f; text-align: center; font: 13px/20px "Liberation Sans", sans-serif; color: #a4a6a7; }
.art-side { display: grid; width: 18px; margin-top: 5px; height: 27px; border: solid #bbb; border-width: 1px 0 2px; border-bottom-color: #666; padding-bottom: 4px; justify-items: center; align-items: center; }
.tri { width: 8px; height: 7px; color: #202222; }
.tri.up { transform: rotate(180deg); }
.tri.left { transform: rotate(90deg); }
.tri.right { transform: rotate(-90deg); }
.keys, .lane, .vscroll { margin-top: 18px; }
.keys { position: relative; overflow: hidden; background: #d4d4d4; border-right: 1px solid #000; border-bottom: 1px solid #777; }
.black { position: absolute; left: 0; width: 96px; height: 12px; border-radius: 0 3px 3px 0; border: 1px solid #111; border-left: 0; box-shadow: inset 0 1px #555, inset 0 -1px #444; background: linear-gradient(90deg, #262222 60px, #544e4e 84px, #999 85px, #2a2a2a 87px, #000 92px); }
.black.cool { background: linear-gradient(90deg, #1d2225 60px, #44525a 84px, #999 85px, #2a2a2a 87px, #000 92px); }
.black::after { content: ""; position: absolute; left: 96px; top: 4px; width: 48px; height: 1px; background: #000; }
.edge { position: absolute; left: 0; right: 0; height: 1px; background: #000; }
.octave { position: absolute; left: 3px; padding: 0 2px; background: #d4d4d4; color: #0a1050; font-size: 11px; line-height: 16px; white-space: nowrap; }
.lane {
  position: relative; overflow: hidden; border-bottom: 1px solid #777;
  background:
    repeating-linear-gradient(90deg, transparent 0 149px, #606162 149px 150px, transparent 150px 156px),
    repeating-linear-gradient(90deg, transparent 0 32px, #4a4b4c 32px 33px, transparent 33px 39px),
    repeating-linear-gradient(#232426 0 13px, #303133 13px 26px, #232426 26px 39px, #303133 39px 52px, #5c5d5e 52px 53px, #303133 53px 65px, #262324 65px 78px, #303133 78px 91px, #262324 91px 104px, #303133 104px 117px, #262324 117px 130px, #303133 130px 143px, #28292a 143px 144px, #303133 144px 156px);
}
.note {
  position: absolute; height: 12px; padding-left: 3px; overflow: hidden;
  border: 1px solid #1fb55c; border-radius: 3px;
  background: linear-gradient(#4ae888, #18b956);
  color: #06280f; font: 9px/11px "Noto Sans", sans-serif; white-space: nowrap;
}
.note.locked { background: rgba(84, 85, 86, .5); border-color: #555758; color: #161718; }
.vscroll, .hscroll { display: flex; align-items: center; color: #d4d4d4; }
.vscroll { flex-direction: column; width: 17px; padding: 4px 0 1px; }
.track-v { flex: 1; display: grid; padding-top: 249px; align-content: start; }
.thumb { display: block; width: 15px; height: 15px; background: #c0c0c0; }
.zoom { width: 14px; height: 14px; }
.vscroll .zoom { margin: 8px 0 0 2px; }
.zoom-v { width: 16px; height: 8px; margin: 3px 0 -5px; border: 1px solid #3c3d3e; }
.zoom-v i { display: block; width: 7px; height: 6px; background: #c0c0c0; }
.vel-head, .velocities { margin-top: 5px; height: 76px; background: #303133; }
.vel-head { display: flex; flex-direction: row-reverse; align-items: flex-end; padding: 0 0 2px 15px; }
.scale { display: grid; align-self: stretch; grid-template-rows: 14px 32px 16px 12px; text-align: right; font-size: 10px; line-height: 12px; color: #8e9092; width: 29px; }
.velocity { width: 99px; height: 20px; padding-left: 6px; justify-content: flex-start; background: #e6bd7e; border-radius: 3px; color: #33291a; font-size: 11px; }
.velocities {
  position: relative; overflow: hidden; border-top: 1px solid #3a3b3d;
  background:
    linear-gradient(transparent 5px, #3e3f40 5px 6px, transparent 6px 69px, #3e3f40 69px 70px, transparent 70px),
    repeating-linear-gradient(90deg, transparent 0 149px, #606162 149px 150px, transparent 150px 156px),
    repeating-linear-gradient(90deg, transparent 0 32px, #4a4b4c 32px 33px, transparent 33px 39px),
    #303133;
}
.vel { position: absolute; top: 27px; height: 42px; width: 6px; border: 1px solid #000; border-bottom: 0; background: #74f0a4; }
.vel.strong { top: 19px; height: 50px; background: #94f7bb; }
.ctl-head { display: flex; align-items: flex-start; padding: 1px 1px 0 1px; }
.add, .transform { height: 20px; background: #323436; color: #dcdcdc; border-radius: 1px; }
.add { width: 20px; }
.add svg { width: 12px; height: 12px; }
.transform { position: relative; width: 86px; margin: 0 13px 0 4px; padding-right: 6px; gap: 6px; color: #b8c2c8; font-size: 11px; }
.transform > svg:first-child { width: 14px; height: 14px; color: #ddd; }
.transform .corner { color: #ddd; }
.hscroll { grid-column: 2 / 4; height: 17px; padding: 0 25px 0 4px; }
.track-h { flex: 1; display: grid; grid-template-columns: 1fr 1fr; }
.track-h .thumb { grid-column: 2; }
.tri.right + .zoom { margin-left: 8px; }
.zoom-h { display: grid; align-content: end; width: 8px; height: 16px; margin: 0 3px; border: 1px solid #3c3d3e; }
.zoom-h i { height: 8px; background: #c0c0c0; }

/* Tracks */
.track-pane { display: flex; margin: 3px 2px 5px 0; background: #202020; border-bottom: 1px solid #6c6e6e; min-height: 0; }
.track-list { flex: 1; padding-left: 3px; display: flex; flex-direction: column; gap: 2px; }
.track { height: 22px; display: flex; align-items: center; width: 263px; padding-left: 10px; background: linear-gradient(90deg, #3c3d3e 7px, #595b5c 8px); color: #b8c4cc; border-bottom: 1px solid #111; }
.num { width: 40px; height: 18px; padding-right: 6px; gap: 11px; background: #cd8843; color: #2a2014; border-radius: 2px; font-size: 13px; }
.active .num, .active .name { background: #e6bd7e; color: #33291a; }
.active .num { gap: 8px; }
.pen { width: 13px; height: 13px; }
.rack { width: 13px; height: 13px; margin: 0 5px 0 4px; color: #dedede; }
.name { width: 100px; height: 18px; padding-left: 6px; font-size: 12px; line-height: 17px; background: #2c2d2e; border-radius: 2px; }
.ms, .arm { height: 20px; background: #484a4b; border: solid #55585a; border-width: 0 1px; color: #c4ccd2; }
.ms { width: 20px; margin-left: 2px; font: bold 11px/16px "Liberation Sans", sans-serif; }
.name + .ms { margin-left: 4px; }
.arm { width: 19px; margin-left: 2px; background: radial-gradient(circle, #e83838 0 5px, #484a4b 6px); }
.tf { width: 21px; height: 18px; margin-left: 1px; background: #2c2d2e; color: #4c4e50; border-radius: 2px; }
.tf svg { width: 12px; height: 12px; }
.pane-scroll { width: 17px; background: #f0f0f0; display: flex; flex-direction: column; justify-content: space-between; align-items: center; padding: 6px 0; }
.pane-scroll svg { width: 8px; height: 6px; fill: none; stroke: #b8b8b8; stroke-width: 2; }

/* Bottom tabs */
.tabs { grid-column: 1 / 3; display: flex; gap: 2px; border-top: 1px solid #2f3030; background: #4b4c4b; font: 12px/16px "Liberation Sans", sans-serif; }
.tabs button { padding-bottom: 2px; }
.tabs .tab { width: 83px; padding-right: 14px; background: linear-gradient(#4e5050, #606262); color: #a9adb0; }
.tabs .current { width: 194px; padding-right: 0; padding-left: 8px; gap: 12px; font-weight: 700; color: #b4bcc0; border-right: 2px solid #2a2b2b; white-space: nowrap; }
.tab svg { width: 9px; height: 9px; }
.tab-tools { margin-left: auto; display: flex; align-items: center; gap: 5px; padding-right: 14px; }
.tab-tools .tri { width: 7px; height: 7px; color: #ddd; }
.dock { width: 12px; height: 11px; }
.double { width: 8px; height: 10px; margin-left: 2px; }
```
